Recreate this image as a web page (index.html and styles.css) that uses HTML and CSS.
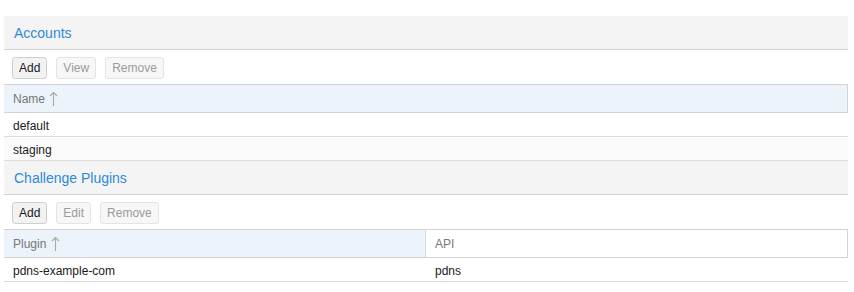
FILE: index.html
```html
<!DOCTYPE html>
<html lang="en">
<head>
  <meta charset="UTF-8">
  <title>ACME</title>
  <link rel="stylesheet" href="styles.css">
</head>
<body>
  <div class="panel">
    <div class="panel-title">Accounts</div>
    <div class="toolbar">
      <button class="btn">Add</button>
      <button class="btn" disabled>View</button>
      <button class="btn" disabled>Remove</button>
    </div>
    <div class="grid">
      <div class="grid-head">
        <div class="col sorted">Name
          <svg class="arrow" width="9" height="15" viewBox="0 0 9 15"><path d="M4.5 1.5V15M1 5l3.5-3.5L8 5" fill="none" stroke="#a9a9a9" stroke-width="1.1"/></svg>
        </div>
      </div>
      <div class="grid-row"><div class="col">default</div></div>
      <div class="grid-row alt"><div class="col">staging</div></div>
    </div>
  </div>

  <div class="panel">
    <div class="panel-title">Challenge Plugins</div>
    <div class="toolbar">
      <button class="btn">Add</button>
      <button class="btn" disabled>Edit</button>
      <button class="btn" disabled>Remove</button>
    </div>
    <div class="grid two">
      <div class="grid-head">
        <div class="col sorted">Plugin
          <svg class="arrow" width="9" height="15" viewBox="0 0 9 15"><path d="M4.5 1.5V15M1 5l3.5-3.5L8 5" fill="none" stroke="#a9a9a9" stroke-width="1.1"/></svg>
        </div>
        <div class="col">API</div>
      </div>
      <div class="grid-row">
        <div class="col">pdns-example-com</div>
        <div class="col">pdns</div>
      </div>
    </div>
  </div>
</body>
</html>
```

FILE: styles.css
```css
body {
  margin: 16px 6px 0 4px;
  font-family: "Liberation Sans", Arial, sans-serif;
  font-size: 12px;
  color: #1a1a1a;
  background: #fff;
}
.panel-title {
  height: 31px;
  line-height: 31px;
  padding: 2px 10px 0;
  background: #f4f4f4;
  border-bottom: 1px solid #d3d3d3;
  color: #2d8ad5;
  font-size: 14px;
}
.toolbar {
  height: 34px;
  display: flex;
  align-items: center;
  gap: 9px;
  padding: 1px 8px 0;
  box-sizing: border-box;
}
.btn {
  height: 22px;
  padding: 0 6px;
  font-family: inherit;
  font-size: 12px;
  color: #1a1a1a;
  background: #f2f2f2;
  border: 1px solid #cfcfcf;
  border-radius: 3px;
}
.btn:disabled {
  color: #9a9a9a;
  background: #f7f7f7;
  border-color: #e4e4e4;
}
.grid-head {
  display: flex;
  height: 27px;
  border-top: 1px solid #d3d3d3;
  border-bottom: 1px solid #d3d3d3;
  color: #777;
  background: #fff;
}
.grid-head .col {
  height: 26px;
  line-height: 26px;
  padding-top: 1px;
}
.grid-head .sorted {
  background: #ecf3fb;
}
.grid-head .col + .col {
  border-left: 1px solid #d9d9d9;
  border-right: 1px solid #d3d3d3;
}
.grid:not(.two) .grid-head .sorted {
  border-right: 1px solid #d3d3d3;
}
.arrow {
  vertical-align: -3px;
  margin-left: 1px;
}
.col {
  flex: 1;
  padding: 0 9px;
}
.grid-row {
  display: flex;
  height: 20px;
  line-height: 20px;
  padding-top: 3px;
  border-bottom: 1px solid #dcdcdc;
}
.grid-row.alt {
  background: #fafafa;
}
```
